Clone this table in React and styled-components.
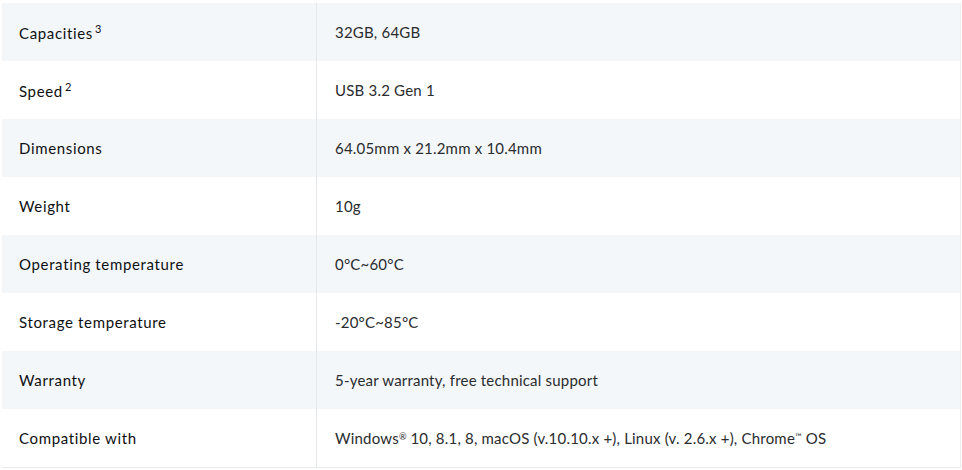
import React from 'react';
import styled, { createGlobalStyle } from 'styled-components';

const GlobalStyle = createGlobalStyle`
  html, body {
    margin: 0;
    padding: 0;
    background: #ffffff;
  }
  body {
    font-family: 'Lato', 'Open Sans', sans-serif;
    color: #222426;
  }
`;

const Wrapper = styled.div`
  padding: 3px 1px 0 2px;
  width: 962px;
  box-sizing: border-box;
`;

const SpecTable = styled.table`
  width: 100%;
  border-collapse: collapse;
  border-right: 1px solid #eceff2;
  border-bottom: 1px solid #e8ebee;
`;

const Row = styled.tr`
  height: 58px;
  background: ${(p) => (p.$shaded ? '#f4f7fa' : '#ffffff')};
`;

const Label = styled.td`
  width: 297px;
  padding: 0 0 0 17px;
  font-size: 15px;
  font-weight: 400;
  letter-spacing: 0.65px;
  color: #0e1012;
  vertical-align: middle;
  border-right: 1px solid #e6e9ec;
`;

const Value = styled.td`
  padding: 0 0 0 18px;
  font-size: 15px;
  letter-spacing: 0.2px;
  color: #2a2c2e;
  vertical-align: middle;
`;

const Sup = styled.sup`
  font-size: 11px;
  margin-left: 2px;
`;

const SmallMark = styled.span`
  font-size: 9px;
  vertical-align: 4px;
  letter-spacing: 0;
`;

const specs = [
  { label: 'Capacities', note: '3', value: '32GB, 64GB' },
  { label: 'Speed', note: '2', value: 'USB 3.2 Gen 1' },
  { label: 'Dimensions', value: '64.05mm x 21.2mm x 10.4mm' },
  { label: 'Weight', value: '10g' },
  { label: 'Operating temperature', value: '0°C~60°C' },
  { label: 'Storage temperature', value: '-20°C~85°C' },
  { label: 'Warranty', value: '5-year warranty, free technical support' },
  {
    label: 'Compatible with',
    value: (
      <>
        Windows<SmallMark>®</SmallMark> 10, 8.1, 8, macOS (v.10.10.x +), Linux (v. 2.6.x +), Chrome<SmallMark>™</SmallMark> OS
      </>
    ),
  },
];

export default function App() {
  return (
    <>
      <GlobalStyle />
      <Wrapper>
        <SpecTable>
          <tbody>
            {specs.map((s, i) => (
              <Row key={s.label} $shaded={i % 2 === 0}>
                <Label>
                  {s.label}
                  {s.note && <Sup>{s.note}</Sup>}
                </Label>
                <Value>{s.value}</Value>
              </Row>
            ))}
          </tbody>
        </SpecTable>
      </Wrapper>
    </>
  );
}
